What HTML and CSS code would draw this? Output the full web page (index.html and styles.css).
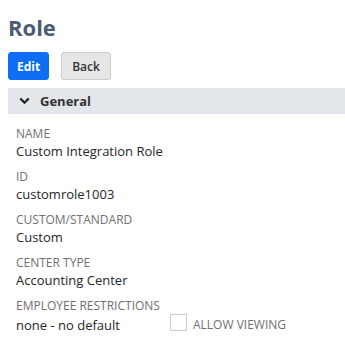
FILE: index.html
```html
<!DOCTYPE html>
<html>

<head>
    <title>Role</title>
    <link rel="stylesheet" href="styles.css">
</head>

<body>
    <h1 class="page-title">Role</h1>

    <div class="actions">
        <button class="btn btn-primary">Edit</button>
        <button class="btn btn-secondary">Back</button>
    </div>

    <div class="section">
        <div class="section-head">
            <svg class="chevron" width="11" height="8" viewBox="0 0 11 8">
                <path d="M1.3 1.5 L5.5 5.7 L9.7 1.5" fill="none" stroke="#222" stroke-width="2.3" />
            </svg>
            <span>General</span>
        </div>

        <div class="fields">
            <div class="field">
                <div class="field-label">NAME</div>
                <div class="field-value">Custom Integration Role</div>
            </div>
            <div class="field">
                <div class="field-label">ID</div>
                <div class="field-value">customrole1003</div>
            </div>
            <div class="field">
                <div class="field-label">CUSTOM/STANDARD</div>
                <div class="field-value">Custom</div>
            </div>
            <div class="field">
                <div class="field-label">CENTER TYPE</div>
                <div class="field-value">Accounting Center</div>
            </div>
            <div class="field">
                <div class="field-label">EMPLOYEE RESTRICTIONS</div>
                <div class="field-row">
                    <div class="field-value field-col">none - no default</div>
                    <label class="check">
                        <span class="check-box"></span>
                        <span class="check-label">ALLOW VIEWING</span>
                    </label>
                </div>
            </div>
        </div>
    </div>
</body>

</html>
```

FILE: styles.css
```css
body {
    margin: 0;
    padding: 0 0 0 8px;
    font-family: "Open Sans", Arial, sans-serif;
    background-color: #ffffff;
    color: #262626;
}

.page-title {
    margin: 0;
    padding-top: 12px;
    font-size: 22px;
    line-height: 30px;
    font-weight: 700;
    color: #4b5b73;
}

.actions {
    display: flex;
    gap: 12px;
    margin-top: 10px;
}

.btn {
    font-family: "Open Sans", Arial, sans-serif;
    font-size: 12px;
    font-weight: 700;
    height: 28px;
    padding: 0 8px;
    border-radius: 3px;
    cursor: pointer;
}

.btn-primary {
    background-color: #0d6ef5;
    border: 1px solid #0d6ef5;
    color: #ffffff;
}

.btn-secondary {
    background-color: #e6e6e6;
    border: 1px solid #cccccc;
    color: #333333;
    font-weight: 600;
    padding: 0 10px;
}

.section {
    margin-top: 8px;
}

.section-head {
    display: flex;
    align-items: center;
    height: 26px;
    background-color: #e3e6eb;
    padding-left: 11px;
    font-size: 13px;
    font-weight: 700;
    color: #333333;
}

.chevron {
    margin-right: 10px;
}

.fields {
    padding: 12px 0 0 8px;
}

.field {
    margin-bottom: 9px;
}

.field-label {
    font-size: 12px;
    line-height: 16px;
    color: #707070;
}

.field-value {
    font-size: 13px;
    line-height: 18px;
    color: #262626;
}

.field-row {
    display: flex;
    align-items: flex-end;
}

.field-col {
    width: 154px;
}

.check {
    display: flex;
    align-items: flex-end;
    gap: 6px;
}

.check-box {
    width: 15px;
    height: 15px;
    border: 1px solid #cccccc;
    margin-bottom: 3px;
}

.check-label {
    font-size: 12px;
    line-height: 18px;
    color: #707070;
}
```
